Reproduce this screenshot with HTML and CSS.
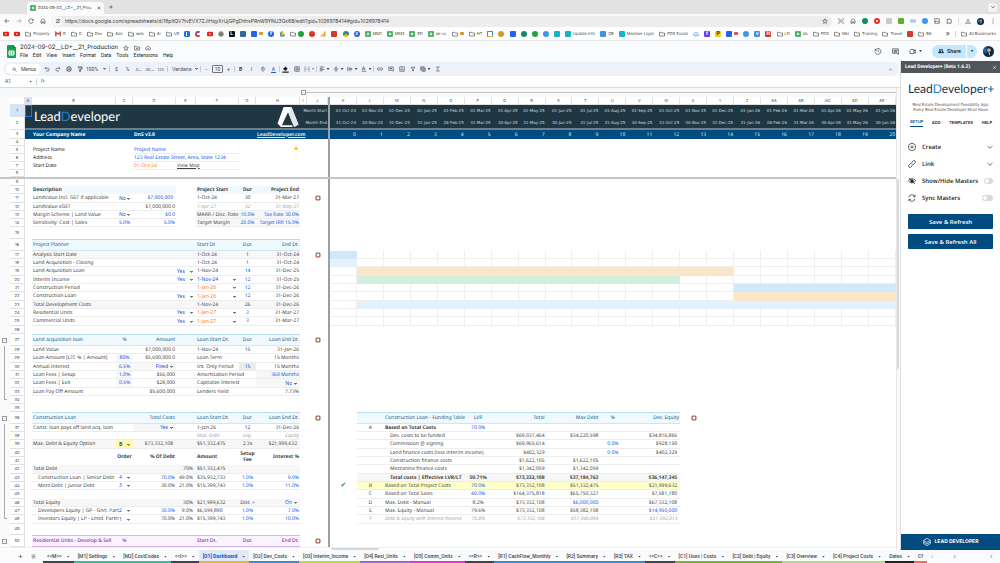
FILE: index.html
```
<!DOCTYPE html>
<html lang="en">
<head>
<meta charset="utf-8">
<title>2024-09-02__LD+__21_Production</title>
<link rel="stylesheet" href="styles.css">
</head>
<body>
<svg class="sprite" aria-hidden="true">
<symbol id="folder" viewBox="0 0 24 24"><path d="M2 5h7l2 3h11v12H2z"/></symbol>
<symbol id="sheet" viewBox="0 0 24 24"><path d="M1 1h22v22H1z" fill="#1e9e4a" stroke="none"/><path d="M12 5v14M5 12h14" stroke="#fff" stroke-width="4"/></symbol>
<symbol id="yt" viewBox="0 0 24 24"><rect y="3" width="24" height="18" rx="4" fill="#e62117" stroke="none"/><path d="M9 8l7 4-7 4z" fill="#fff" stroke="none"/></symbol>
<symbol id="back" viewBox="0 0 24 24"><path d="M21 12H4M11 4l-8 8 8 8"/></symbol>
<symbol id="fwd" viewBox="0 0 24 24"><path d="M3 12h17M13 4l8 8-8 8"/></symbol>
<symbol id="reload" viewBox="0 0 24 24"><path d="M20 8a9 9 0 1 0 1 6M21 3v6h-6"/></symbol>
<symbol id="home" viewBox="0 0 24 24"><path d="M4 10l8-7 8 7v11h-5v-6H9v6H4z"/></symbol>
<symbol id="tune" viewBox="0 0 24 24"><path d="M3 7h9M18 7h3M3 17h3M12 17h9"/><circle cx="15" cy="7" r="3"/><circle cx="9" cy="17" r="3"/></symbol>
<symbol id="star" viewBox="0 0 24 24"><path d="M12 3l3 6 6 1-4.500 5 1 6-5.500-3-5.500 3 1-6L3 10l6-1z"/></symbol>
<symbol id="move" viewBox="0 0 24 24"><path d="M2 5h7l2 3h11v12H2zM8 14h7M12 11l3 3-3 3"/></symbol>
<symbol id="cloud" viewBox="0 0 24 24"><path d="M7 19a5 5 0 0 1-1-10 7 7 0 0 1 13 2 4 4 0 0 1 0 8zM9 14l2 2 4-4"/></symbol>
<symbol id="search" viewBox="0 0 24 24"><circle cx="10" cy="10" r="6"/><path d="M15 15l7 7"/></symbol>
<symbol id="undo" viewBox="0 0 24 24"><path d="M8 20h7a5 5 0 0 0 0-11H4M9 4L4 9l5 5"/></symbol>
<symbol id="redo" viewBox="0 0 24 24"><path d="M16 20H9A5 5 0 0 1 9 9h11M15 4l5 5-5 5"/></symbol>
<symbol id="print" viewBox="0 0 24 24"><path d="M7 8V3h10v5M7 17H3V8h18v9h-4M7 14h10v7H7z"/></symbol>
<symbol id="paint" viewBox="0 0 24 24"><path d="M5 3h13v5H5zM18 5h3v7h-9v4M10 16h4v6h-4z"/></symbol>
<symbol id="strike" viewBox="0 0 24 24"><path d="M3 12h18M17 8c0-5-10-5-10-1 0 2 2 3 5 3M7 16c0 5 10 5 10 1"/></symbol>
<symbol id="fill" viewBox="0 0 24 24"><path d="M5 10l7-7 6 7-6 5z" fill="currentColor"/><path d="M1 21h22" stroke-width="4"/></symbol>
<symbol id="borders" viewBox="0 0 24 24"><path d="M3 3h18v18H3zM12 3v18M3 12h18"/></symbol>
<symbol id="merge" viewBox="0 0 24 24"><path d="M8 3H3v18h5M16 3h5v18h-5M3 12h6M21 12h-6M7 9l3 3-3 3M17 9l-3 3 3 3"/></symbol>
<symbol id="lines" viewBox="0 0 24 24"><path d="M3 4h18M3 9h12M3 14h18M3 19h12"/></symbol>
<symbol id="menu" viewBox="0 0 24 24"><path d="M3 5h18M3 12h18M3 19h18"/></symbol>
<symbol id="valign" viewBox="0 0 24 24"><path d="M3 12h18M12 1v8M12 23v-8M9 6l3 3 3-3M9 18l3-3 3 3"/></symbol>
<symbol id="wrap" viewBox="0 0 24 24"><path d="M3 3v18M12 3v18M5 12h15M17 8l4 4-4 4"/></symbol>
<symbol id="rotate" viewBox="0 0 24 24"><path d="M4 17L10 3l6 14M6 12h8M3 21h18"/></symbol>
<symbol id="link" viewBox="0 0 24 24"><path d="M10 7H7a5 5 0 0 0 0 10h3M14 7h3a5 5 0 0 1 0 10h-3M8 12h8"/></symbol>
<symbol id="comment" viewBox="0 0 24 24"><path d="M3 4h18v17l-4-4H3zM12 7v7M8 10h8"/></symbol>
<symbol id="notes" viewBox="0 0 24 24"><path d="M2 3h20v19l-5-4H2zM6 8h12M6 11h12M6 14h12"/></symbol>
<symbol id="chart" viewBox="0 0 24 24"><path d="M3 3h18v18H3zM8 17v-6M12 17V7M16 17v-4"/></symbol>
<symbol id="filter" viewBox="0 0 24 24"><path d="M4 5h16l-6 8v7h-4v-7z"/></symbol>
<symbol id="views" viewBox="0 0 24 24"><path d="M3 3h14v14H3zM7 21h14V8M3 8h14M3 12h14"/></symbol>
<symbol id="sigma" viewBox="0 0 24 24"><path d="M19 4H6l7 8-7 8h13"/></symbol>
<symbol id="history" viewBox="0 0 24 24"><path d="M3 6v5h5M4 9a9 9 0 1 1-1 5M12 7v6l4 3"/></symbol>
<symbol id="video" viewBox="0 0 24 24"><path d="M7 5h10v14H3V9zM17 10l5-4v12l-5-4"/></symbol>
<symbol id="people" viewBox="0 0 24 24"><path d="M2 19c0-7 12-7 12 0zM16 19h6c0-4-3-6-6-5" fill="currentColor"/><circle cx="8" cy="8" r="3"/><circle cx="16" cy="8" r="3"/></symbol>
<symbol id="scan" viewBox="0 0 24 24"><path d="M2 7V3h5M17 3h5v4M22 17v4h-5M7 21H2v-4M7 8h10v8H7z"/></symbol>
<symbol id="pic" viewBox="0 0 24 24"><path d="M3 3h18v18H3zM3 17l6-6 5 5 3-3 4 4"/></symbol>
<symbol id="puzzle" viewBox="0 0 24 24"><path d="M4 6h5c0-5 6-5 6 0h5v5c4 0 4 5 0 5v5H4v-5c4 0 4-5 0-5z"/></symbol>
<symbol id="download" viewBox="0 0 24 24"><path d="M12 3v12M7 10l5 5 5-5M3 17v4h18v-4"/></symbol>
<symbol id="dots" viewBox="0 0 24 24"><path d="M12 3v3M12 11v3M12 19v3" stroke-width="4"/></symbol>
<symbol id="up" viewBox="0 0 24 24"><path d="M5 16l7-7 7 7"/></symbol>
<symbol id="down" viewBox="0 0 24 24"><path d="M2 8l10 9 10-9"/></symbol>
<symbol id="left" viewBox="0 0 24 24"><path d="M15 5l-7 7 7 7"/></symbol>
<symbol id="right" viewBox="0 0 24 24"><path d="M9 5l7 7-7 7"/></symbol>
<symbol id="close" viewBox="0 0 24 24"><path d="M4 4l16 16M20 4L4 20"/></symbol>
<symbol id="plus" viewBox="0 0 24 24"><path d="M12 3v18M3 12h18"/></symbol>
<symbol id="buoy" viewBox="0 0 24 24"><circle cx="12" cy="12" r="8" stroke="#9a9a9a" stroke-width="6"/><path d="M4 9a9 9 0 0 1 5-5M15 4a9 9 0 0 1 5 5M20 15a9 9 0 0 1-5 5M9 20a9 9 0 0 1-5-5" stroke="#d9573c" stroke-width="5"/><circle cx="12" cy="12" r="4" fill="#fff" stroke="none"/></symbol>
<symbol id="addc" viewBox="0 0 24 24"><circle cx="12" cy="12" r="11"/><path d="M12 7v10M7 12h10"/></symbol>
<symbol id="chain" viewBox="0 0 24 24"><path d="M10 14a4 4 0 0 0 6 0l5-5a4 4 0 0 0-6-6l-3 3M14 10a4 4 0 0 0-6 0l-5 5a4 4 0 0 0 6 6l3-3"/></symbol>
<symbol id="hide" viewBox="0 0 24 24"><path d="M1 11c6-8 16-8 22 0-6 9-16 9-22 0zM3 3l18 18"/><circle cx="12" cy="12" r="4" fill="currentColor"/></symbol>
<symbol id="sync" viewBox="0 0 24 24"><path d="M3 10a9 9 0 0 1 17-3M21 2v6h-6M21 14a9 9 0 0 1-17 3M3 22v-6h6"/></symbol>
<symbol id="cube" viewBox="0 0 24 24"><path d="M12 1l10 6-10 6L2 7zM2 12l10 6 10-6M2 17l10 6 10-6M2 7v10M22 7v10"/></symbol>
<symbol id="peak" viewBox="0 0 24 24"><path d="M0 20L7 1h9l8 20-5 3-7-17-7 15h12v2H4z" fill="#fff" stroke="none"/><path d="M16 1l8 20-5 3-6-15z" fill="#dfe5e9" stroke="none"/></symbol>
<symbol id="face" viewBox="0 0 24 24"><circle cx="12" cy="12" r="12" fill="#0d2c4c" stroke="none"/><path d="M0 12a12 12 0 0 1 8-11v16z" fill="#1664a0" stroke="none"/><circle cx="13" cy="9" r="4" fill="#d9a58b" stroke="none"/><path d="M5 22c2-11 14-11 16-2" fill="#182430" stroke="none"/><path d="M12 14h3l-1 7z" fill="#fff" stroke="none"/></symbol>
<symbol id="drive" viewBox="0 0 24 24"><path d="M8 2h8l-9 16-4-7z" fill="#17a05d" stroke="none"/><path d="M16 2l8 14h-8L9 5z" fill="#fbc116" stroke="none"/><path d="M3 22l4-7h17l-4 7z" fill="#3b7ded" stroke="none"/></symbol>
<symbol id="gmail" viewBox="0 0 24 24"><path d="M3 21V5l9 8 9-8v16" stroke="#df4334" stroke-width="5"/><path d="M3 21V9" stroke="#4285f4" stroke-width="5"/></symbol>
<symbol id="bars" viewBox="0 0 24 24"><path d="M5 22v-5M12 22V10M19 22V2" stroke="#f29a2e" stroke-width="6"/></symbol>
</svg>

<header class="browser">
  <div class="tabstrip">
    <div class="tab"><svg class="i"><use href="#sheet"/></svg><span>2024-09-02__LD+__21_Proc</span><button class="ib" aria-label="Close tab"><svg class="i s4"><use href="#close"/></svg></button></div>
    <button class="ib" aria-label="New tab"><svg class="i s4"><use href="#plus"/></svg></button>
    <button class="ib tabmenu" aria-label="Search tabs"><svg class="i s4"><use href="#down"/></svg></button>
  </div>
  <div class="address">
    <nav class="nav" aria-label="History">
      <button class="ib" aria-label="Back"><svg class="i"><use href="#back"/></svg></button>
      <button class="ib dim" aria-label="Forward"><svg class="i"><use href="#fwd"/></svg></button>
      <button class="ib" aria-label="Reload"><svg class="i"><use href="#reload"/></svg></button>
      <button class="ib" aria-label="Home"><svg class="i"><use href="#home"/></svg></button>
    </nav>
    <div class="omni"><span class="site"><svg class="i"><use href="#tune"/></svg></span><input aria-label="Address" value="https://docs.google.com/spreadsheets/d/16pltQV7tvEVX7ZJiHqyXrUjGPgDhhsPRnW9YNU3Gx68/edit?gid=1026978414#gid=1026978414"><button class="ib" aria-label="Bookmark"><svg class="i"><use href="#star"/></svg></button></div>
    <div class="exts">
      <svg class="i c-olive"><use href="#scan"/></svg><svg class="i"><use href="#home"/></svg><i class="dot green"></i><i class="dot ring"></i><i class="sq grey"></i><i class="sq lime"></i><svg class="i c-blue"><use href="#link"/></svg><i class="dot sky"></i><svg class="i"><use href="#pic"/></svg><svg class="i"><use href="#puzzle"/></svg>
    </div>
    <div class="exts tail"><svg class="i"><use href="#download"/></svg><svg class="i s7"><use href="#face"/></svg><svg class="i"><use href="#dots"/></svg></div>
  </div>
  <nav class="bookmarks" aria-label="Bookmarks">
    <div class="bm">
      <a><svg class="i"><use href="#yt"/></svg></a><a><svg class="i"><use href="#yt"/></svg></a>
      <a><svg class="i"><use href="#folder"/></svg>Property</a><a><svg class="i"><use href="#gmail"/></svg>G</a><a><svg class="i"><use href="#folder"/></svg>C</a><a><svg class="i"><use href="#folder"/></svg>Dev</a><a><svg class="i"><use href="#folder"/></svg>Ads</a><a><svg class="i"><use href="#folder"/></svg>web</a><a><svg class="i"><use href="#folder"/></svg>AI</a><a><svg class="i"><use href="#folder"/></svg>US</a>
      <a><i class="sq trello"></i></a><a><i class="dot ring half"></i></a><a><svg class="i"><use href="#yt"/></svg></a><a><i class="dot greyd"></i></a><a><i class="sq black">L</i></a><a><i class="sq steel"></i></a><a><i class="sq blue"></i><i class="mini amber"></i></a><a><i class="dot blue">f</i></a><a><svg class="i"><use href="#drive"/></svg></a><a><svg class="i"><use href="#folder"/></svg><i class="dot leaf"></i></a><a><i class="dot red half"></i></a><a><svg class="i"><use href="#bars"/></svg></a><a><i class="sq red"></i></a><a><i class="dot multi"></i></a><a><i class="dot blue">z</i></a>
      <a><svg class="i"><use href="#sheet"/></svg>MM1</a><a><svg class="i"><use href="#sheet"/></svg>MM2</a><a><svg class="i"><use href="#sheet"/></svg>ED</a><a><svg class="i"><use href="#sheet"/></svg>ak-cc</a><a><svg class="i"><use href="#folder"/></svg><i class="mini amber"></i></a><a><svg class="i"><use href="#folder"/></svg>HT</a>
      <a><i class="sq cal"></i></a><a><i class="dot amber"></i></a><a><i class="sq blue"></i></a><a><i class="dot green"></i></a><a><i class="dot leaf"></i></a><a><i class="dot sky"></i></a><a><i class="sq cyan"></i></a><a><i class="sq cyan"></i>Update Info</a><a><i class="sq sky"></i>CB</a><a><i class="sq cyan"></i>Member Login</a><a><svg class="i"><use href="#folder"/></svg>PDS Social</a>
      <a><svg class="i c-blue"><use href="#cloud"/></svg></a><a><i class="sq violet">f</i></a><a><i class="sq yellow">P</i></a><a><i class="sq blue"></i><i class="mini redm"></i></a><a><i class="dot sky"></i></a><a><i class="sq sky">v</i></a><a><i class="sq red">H</i></a><a><svg class="i"><use href="#folder"/></svg>LD</a><a><svg class="i"><use href="#sheet"/></svg>db</a><a><svg class="i"><use href="#folder"/></svg>PDS</a><a><svg class="i"><use href="#folder"/></svg>Mkt</a><a><svg class="i"><use href="#folder"/></svg>Training</a><a><svg class="i"><use href="#folder"/></svg>Travel</a><a><i class="sq red"></i></a><a><svg class="i"><use href="#folder"/></svg>BA</a>
    </div>
    <button class="ib more" aria-label="More bookmarks">»</button><span class="bar"></span><a><svg class="i"><use href="#folder"/></svg>All Bookmarks</a>
  </nav>
</header>

<header class="docs">
  <svg class="doclogo" viewBox="0 0 18 26"><path d="M2 0h10l6 6v18a2 2 0 0 1-2 2H2a2 2 0 0 1-2-2V2a2 2 0 0 1 2-2z" fill="#12a150"/><path d="M12 0l6 6h-6z" fill="#0b7a3a"/><path d="M4 12h10v8H4zM9 12v8M4 16h10" fill="none" stroke="#fff" stroke-width="2"/></svg>
  <div class="doctitle">
    <div class="titlerow"><h1>2024-09-02__LD+__21_Production</h1><svg class="i"><use href="#star"/></svg><svg class="i"><use href="#move"/></svg><svg class="i"><use href="#cloud"/></svg></div>
    <nav class="menus" aria-label="Menu bar"><button>File</button><button>Edit</button><button>View</button><button>Insert</button><button>Format</button><button>Data</button><button>Tools</button><button>Extensions</button><button>Help</button></nav>
  </div>
  <div class="docactions">
    <button class="ib" aria-label="Version history"><svg class="i s8"><use href="#history"/></svg></button>
    <button class="ib" aria-label="Comments"><svg class="i s7"><use href="#notes"/></svg></button>
    <button class="ib" aria-label="Meet"><svg class="i s7"><use href="#video"/></svg><i class="caret"></i></button>
    <div class="share"><button class="sharebtn"><svg class="i"><use href="#people"/></svg>Share</button><button class="sharemore" aria-label="Share options"><i class="caret"></i></button></div>
    <svg class="avatar"><use href="#face"/></svg>
  </div>
</header>

<main class="work">
  <section class="left">
    <div class="toolbar" role="toolbar" aria-label="Formatting">
      <button class="menusearch"><svg class="i s5"><use href="#search"/></svg>Menus</button>
      <button class="t" aria-label="Undo"><svg class="i"><use href="#undo"/></svg></button><button class="t" aria-label="Redo"><svg class="i"><use href="#redo"/></svg></button><button class="t" aria-label="Print"><svg class="i"><use href="#print"/></svg></button><button class="t" aria-label="Paint format"><svg class="i"><use href="#paint"/></svg></button>
      <select class="tsel" aria-label="Zoom"><option>100%</option></select><span class="sep"></span>
      <button class="t">$</button><button class="t">%</button><button class="t small">.0←</button><button class="t small">.00→</button><button class="t small">123</button><span class="sep"></span>
      <select class="tsel wide" aria-label="Font"><option>Verdana</option></select><span class="sep tight"></span>
      <button class="t" aria-label="Smaller">−</button><input class="fsize" aria-label="Font size" value="10"><button class="t" aria-label="Larger">+</button><span class="sep tight"></span>
      <button class="t"><b>B</b></button><button class="t"><em>I</em></button><button class="t" aria-label="Strikethrough"><svg class="i"><use href="#strike"/></svg></button><button class="t"><span class="txtcol">A</span></button><span class="sep tight"></span>
      <button class="t dark" aria-label="Fill colour"><svg class="i s7"><use href="#fill"/></svg></button><button class="t" aria-label="Borders"><svg class="i"><use href="#borders"/></svg></button><button class="t d dim" aria-label="Merge"><svg class="i"><use href="#merge"/></svg><i class="caret"></i></button><span class="sep tight"></span>
      <button class="t d" aria-label="Align"><svg class="i"><use href="#lines"/></svg><i class="caret"></i></button><button class="t d" aria-label="Vertical align"><svg class="i"><use href="#valign"/></svg><i class="caret"></i></button><button class="t d" aria-label="Wrap"><svg class="i"><use href="#wrap"/></svg><i class="caret"></i></button><button class="t d" aria-label="Rotate"><svg class="i"><use href="#rotate"/></svg><i class="caret"></i></button><span class="sep tight"></span>
      <button class="t" aria-label="Link"><svg class="i"><use href="#link"/></svg></button><button class="t" aria-label="Comment"><svg class="i"><use href="#comment"/></svg></button><button class="t" aria-label="Chart"><svg class="i"><use href="#chart"/></svg></button><button class="t" aria-label="Filter"><svg class="i"><use href="#filter"/></svg></button><button class="t d" aria-label="Filter views"><svg class="i"><use href="#views"/></svg><i class="caret"></i></button><button class="t" aria-label="Functions"><svg class="i"><use href="#sigma"/></svg></button>
      <button class="ib collapse" aria-label="Hide menus"><svg class="i s5"><use href="#up"/></svg></button>
    </div>
    <div class="formula"><input class="namebox" aria-label="Cell" value="A1"><i class="caret"></i><span class="bar"></span><em>fx</em><input class="fx" aria-label="Formula"></div>

    <div class="sheetwrap">
      <div class="sheet">
        <div class="groupbar"><button class="tg" aria-label="Collapse columns">−</button><span></span></div>
        <table>
          <colgroup><col class="w10"><col class="w15"><col class="w7"><col class="w84"><col class="w17"><col class="w43"><col class="w20"><col class="w43"><col class="w17"><col class="w44"><col class="w7"><col class="w21"><col class="w2"><col span="21"></colgroup>
          <thead><tr><td class="gt"></td><th></th><th class="on">A</th><th>B</th><th>C</th><th>D</th><th>E</th><th>F</th><th>G</th><th>H</th><th>I</th><th>J</th><td class="fz"></td><th>K</th><th>L</th><th>M</th><th>N</th><th>O</th><th>P</th><th>Q</th><th>R</th><th>S</th><th>T</th><th>U</th><th>V</th><th>W</th><th>X</th><th>Y</th><th>Z</th><th>AA</th><th>AB</th><th>AC</th><th>AD</th><th>AE</th></tr></thead>
          <tbody>
          <tr class="navy h12"><td class="gt"></td><th class="on">1</th><td class="a1"></td><td colspan="6" rowspan="2" class="logo">Lead<b>D</b>eveloper</td><td rowspan="2" class="r"><svg class="peak"><use href="#peak"/></svg></td><td colspan="2" class="r">Month Start</td><td class="fz"></td><td>01-Oct-24</td><td>01-Nov-24</td><td>01-Dec-24</td><td>01-Jan-25</td><td>01-Feb-25</td><td>01-Mar-25</td><td>01-Apr-25</td><td>01-May-25</td><td>01-Jun-25</td><td>01-Jul-25</td><td>01-Aug-25</td><td>01-Sep-25</td><td>01-Oct-25</td><td>01-Nov-25</td><td>01-Dec-25</td><td>01-Jan-26</td><td>01-Feb-26</td><td>01-Mar-26</td><td>01-Apr-26</td><td>01-May-26</td><td>01-Jun-26</td></tr>
          <tr class="navy h13"><td class="gt"></td><th>2</th><td></td><td colspan="2" class="r">Month End</td><td class="fz"></td><td>31-Oct-24</td><td>30-Nov-24</td><td>31-Dec-24</td><td>31-Jan-25</td><td>28-Feb-25</td><td>31-Mar-25</td><td>30-Apr-25</td><td>31-May-25</td><td>30-Jun-25</td><td>31-Jul-25</td><td>31-Aug-25</td><td>30-Sep-25</td><td>31-Oct-25</td><td>30-Nov-25</td><td>31-Dec-25</td><td>31-Jan-26</td><td>28-Feb-26</td><td>31-Mar-26</td><td>30-Apr-26</td><td>31-May-26</td><td>30-Jun-26</td></tr>
          <tr class="ocean h9"><td class="gt"></td><th>3</th><td></td><td class="b l">Your Company Name</td><td></td><td class="b l">DnS v3.0</td><td></td><td></td><td></td><td class="b r"><a href="#" >LeadDeveloper.com</a></td><td></td><td></td><td class="fz"></td><td>0</td><td>1</td><td>2</td><td>3</td><td>4</td><td>5</td><td>6</td><td>7</td><td>8</td><td>9</td><td>10</td><td>11</td><td>12</td><td>13</td><td>14</td><td>15</td><td>16</td><td>17</td><td>18</td><td>19</td><td>20</td></tr>
          <tr class="h7"><td class="gt"></td><th>4</th><td colspan="10"></td><td class="fz"></td><td colspan="21"></td></tr>
          <tr class="form"><td class="gt"></td><th>5</th><td></td><td class="k">Project Name</td><td></td><td class="bl">Project Name</td><td></td><td></td><td></td><td class="r spark">✦</td><td></td><td></td><td class="fz"></td><td colspan="21"></td></tr>
          <tr class="form"><td class="gt"></td><th>6</th><td></td><td class="k">Address</td><td></td><td class="bl">123 Real Estate Street, Area, State 1234</td><td></td><td></td><td></td><td></td><td></td><td></td><td class="fz"></td><td colspan="21"></td></tr>
          <tr class="form"><td class="gt"></td><th>7</th><td></td><td class="k">Start Date</td><td></td><td class="or">01-Oct-24</td><td><a href="#">View Map</a></td><td></td><td></td><td></td><td></td><td></td><td class="fz"></td><td colspan="21"></td></tr>
          <tr class="h7"><td class="gt"></td><th>8</th><td colspan="10"></td><td class="fz"></td><td colspan="21"></td></tr>
          <tr class="freeze"><td colspan="34"></td></tr>
          <tr class="h7"><td class="gt"></td><th>9</th><td colspan="10"></td><td class="fz"></td><td colspan="21"></td></tr>
          <tr class="sub split"><td class="gt"></td><th>10</th><td></td><td>Description</td><td></td><td></td><td></td><td>Project Start</td><td class="c">Dur</td><td class="r">Project End</td><td></td><td></td><td class="fz"></td><td colspan="21"></td></tr>
          <tr class="ln split h9"><td class="gt"></td><th>11</th><td></td><td>LandValue Incl. GST if applicable</td><td class="bl"><select aria-label="GST"><option>No</option></select></td><td class="r bl in">$7,000,000</td><td></td><td>1-Oct-24</td><td class="c">30</td><td class="r">31-Mar-27</td><td></td><td class="c"><svg class="i"><use href="#buoy"/></svg></td><td class="fz"></td><td colspan="21"></td></tr>
          <tr class="ln split"><td class="gt"></td><th>12</th><td></td><td>LandValue xGST</td><td></td><td class="r">$7,000,000.0</td><td></td><td class="mu">1-Apr-27</td><td class="c mu">32</td><td class="r mu">31-May-27</td><td></td><td></td><td class="fz"></td><td colspan="21"></td></tr>
          <tr class="ln split sh3"><td class="gt"></td><th>13</th><td></td><td>Margin Scheme | Land Value</td><td class="bl"><select aria-label="Margin scheme"><option>No</option></select></td><td class="r bl">$0.0</td><td></td><td>MARR / Disc. Rate</td><td class="c bl">10.0%</td><td class="r bl">Tax Rate 30.0%</td><td></td><td></td><td class="fz"></td><td colspan="21"></td></tr>
          <tr class="ln split sh3"><td class="gt"></td><th>14</th><td></td><td>Sensitivity: Cost | Sales</td><td class="c bl">5.0%</td><td class="r bl">5.0%</td><td></td><td>Target Margin</td><td class="c bl">20.0%</td><td class="r bl">Target IRR 15.0%</td><td></td><td></td><td class="fz"></td><td colspan="21"></td></tr>
          <tr class="h12"><td class="gt"></td><th>15</th><td colspan="10"></td><td class="fz"></td><td colspan="21"></td></tr>
          <tr class="hd h12"><td class="gt"></td><th>16</th><td></td><td>Project Planner</td><td></td><td></td><td></td><td>Start Dt</td><td class="c">Dur.</td><td class="r">End Dt.</td><td></td><td></td><td class="fz"></td><td colspan="21"></td></tr>
          <tr class="ln sh tl"><td class="gt"></td><th>17</th><td></td><td>Analysis Start Date</td><td></td><td></td><td></td><td>1-Oct-24</td><td class="c">1</td><td class="r">31-Oct-24</td><td></td><td class="c"><svg class="i"><use href="#buoy"/></svg></td><td class="fz"></td><td class="sky2"></td><td><td><td><td><td><td><td><td><td><td><td><td><td><td><td><td><td><td><td><td></td></tr>
          <tr class="ln tl"><td class="gt"></td><th>18</th><td></td><td>Land Acquisition - Closing</td><td></td><td></td><td></td><td>1-Oct-24</td><td class="c">1</td><td class="r">31-Oct-24</td><td></td><td></td><td class="fz"></td><td class="sky1"></td><td><td><td><td><td><td><td><td><td><td><td><td><td><td><td><td><td><td><td><td></td></tr>
          <tr class="ln tl h9"><td class="gt"></td><th>19</th><td></td><td>Land Acquisition Loan</td><td></td><td></td><td class="bl"><select aria-label="Acquisition loan"><option>Yes</option></select></td><td>1-Nov-24</td><td class="c bl">14</td><td class="r">31-Dec-25</td><td></td><td></td><td class="fz"></td><td></td><td colspan="14" class="peach"></td><td><td><td><td><td><td></td></tr>
          <tr class="ln tl"><td class="gt"></td><th>20</th><td></td><td>Interim Income</td><td></td><td></td><td class="bl"><select aria-label="Interim income"><option>Yes</option></select></td><td class="bl"><select aria-label="Interim start"><option>1-Nov-24</option></select></td><td class="c bl">12</td><td class="r">31-Oct-25</td><td></td><td></td><td class="fz"></td><td></td><td colspan="12" class="mint"></td><td><td><td><td><td><td><td><td></td></tr>
          <tr class="ln tl"><td class="gt"></td><th>21</th><td></td><td>Construction Period</td><td></td><td></td><td></td><td class="or"><select aria-label="Construction start"><option>1-Jan-26</option></select></td><td class="c bl">12</td><td class="r">31-Dec-26</td><td></td><td></td><td class="fz"></td><td><td><td><td><td><td><td><td><td><td><td><td><td><td><td></td><td colspan="6" class="sky2"></td></tr>
          <tr class="ln tl h9"><td class="gt"></td><th>22</th><td></td><td>Construction Loan</td><td></td><td></td><td class="bl"><select aria-label="Construction loan"><option>Yes</option></select></td><td class="or"><select aria-label="Loan start"><option>1-Jan-26</option></select></td><td class="c bl">12</td><td class="r">31-Dec-26</td><td></td><td></td><td class="fz"></td><td><td><td><td><td><td><td><td><td><td><td><td><td><td><td></td><td colspan="6" class="peach"></td></tr>
          <tr class="ln sh tl"><td class="gt"></td><th>23</th><td></td><td>Total Development Costs</td><td></td><td></td><td></td><td>1-Nov-24</td><td class="c">26</td><td class="r">31-Dec-26</td><td></td><td></td><td class="fz"></td><td></td><td colspan="20" class="sky1"></td></tr>
          <tr class="ln tl"><td class="gt"></td><th>24</th><td></td><td>Residential Units</td><td></td><td></td><td class="bl"><select aria-label="Residential"><option>Yes</option></select></td><td class="or"><select aria-label="Residential start"><option>1-Jan-27</option></select></td><td class="c bl">3</td><td class="r">31-Mar-27</td><td></td><td></td><td class="fz"></td><td><td><td><td><td><td><td><td><td><td><td><td><td><td><td><td><td><td><td><td><td></td></tr>
          <tr class="ln tl h9"><td class="gt"></td><th>25</th><td></td><td>Commercial Units</td><td></td><td></td><td class="bl"><select aria-label="Commercial"><option>Yes</option></select></td><td class="or"><select aria-label="Commercial start"><option>1-Jan-27</option></select></td><td class="c bl">3</td><td class="r">31-Mar-27</td><td></td><td></td><td class="fz"></td><td><td><td><td><td><td><td><td><td><td><td><td><td><td><td><td><td><td><td><td><td></td></tr>
          <tr><td class="gt"></td><th>26</th><td colspan="10"></td><td class="fz"></td><td colspan="21"></td></tr>
          <tr class="hd h12"><td class="gt"><button class="tg" aria-label="Collapse rows">−</button></td><th>27</th><td></td><td>Land acquisition loan</td><td class="c">%</td><td class="r">Amount</td><td></td><td>Loan Start Dt.</td><td class="c">Dur.</td><td class="r">Loan End Dt.</td><td></td><td class="c"><svg class="i"><use href="#buoy"/></svg></td><td class="fz"></td><td colspan="21"></td></tr>
          <tr class="ln"><td class="gt gl"></td><th>28</th><td></td><td>Land Value</td><td></td><td class="r">$7,000,000.0</td><td></td><td>1-Nov-24</td><td class="c">15</td><td class="r">31-Jan-26</td><td></td><td></td><td class="fz"></td><td colspan="21"></td></tr>
          <tr class="ln h9"><td class="gt gl"></td><th>29</th><td></td><td>Loan Amount [LTC % | Amount]</td><td class="c bl f">80%</td><td class="r">$5,600,000.0</td><td></td><td>Loan Term</td><td></td><td class="r">15 Months</td><td></td><td></td><td class="fz"></td><td colspan="21"></td></tr>
          <tr class="ln"><td class="gt gl"></td><th>30</th><td></td><td>Annual Interest</td><td class="c bl f">6.5%</td><td class="bl f"><select class="end" aria-label="Interest type"><option>Fixed</option></select></td><td></td><td>Int. Only Period</td><td class="c bl g">15</td><td class="r">15 Months</td><td></td><td></td><td class="fz"></td><td colspan="21"></td></tr>
          <tr class="ln"><td class="gt gl"></td><th>31</th><td></td><td>Loan Fees | Setup</td><td class="c bl f">1.0%</td><td class="r">$56,000</td><td></td><td>Amortisation Period</td><td></td><td class="r bl f">360 Months</td><td></td><td></td><td class="fz"></td><td colspan="21"></td></tr>
          <tr class="ln h9"><td class="gt gl"></td><th>32</th><td></td><td>Loan Fees | Exit</td><td class="c bl f">0.5%</td><td class="r">$28,000</td><td></td><td>Capitalize Interest</td><td></td><td class="bl f"><select class="end" aria-label="Capitalize interest"><option>No</option></select></td><td></td><td></td><td class="fz"></td><td colspan="21"></td></tr>
          <tr class="ln"><td class="gt gl"></td><th>33</th><td></td><td>Loan Pay Off Amount</td><td></td><td class="r">$5,600,000</td><td></td><td>Lenders Yield</td><td></td><td class="r">7.73%</td><td></td><td></td><td class="fz"></td><td colspan="21"></td></tr>
          <tr><td class="gt ge"></td><th>34</th><td colspan="10"></td><td class="fz"></td><td colspan="21"></td></tr>
          <tr><td class="gt"></td><th>35</th><td colspan="10"></td><td class="fz"></td><td colspan="21"></td></tr>
          <tr class="hd fh h12"><td class="gt"><button class="tg" aria-label="Collapse rows">−</button></td><th>36</th><td></td><td>Construction Loan</td><td></td><td class="r">Total Costs</td><td></td><td>Loan Start Dt.</td><td class="c">Dur.</td><td class="r">Loan End Dt.</td><td></td><td class="c"><svg class="i"><use href="#buoy"/></svg></td><td class="fz"></td><td></td><td></td><td colspan="3">Construction Loan - Funding Table</td><td class="c">LVR</td><td colspan="2" class="r">Total</td><td colspan="2" class="r">Max Debt</td><td class="c">%</td><td colspan="2" class="r">Dev. Equity</td><td class="c"><svg class="i"><use href="#buoy"/></svg></td><td colspan="7"></td></tr>
          <tr class="ln fd"><td class="gt gl"></td><th>37</th><td></td><td>Const. loan pays off land acq. loan</td><td></td><td class="bl f"><select class="end" aria-label="Pays off land loan"><option>Yes</option></select></td><td></td><td>1-Jan-26</td><td class="c">12</td><td class="r">31-Dec-26</td><td></td><td></td><td class="fz"></td><td></td><td class="c">A</td><td colspan="3" class="b">Based on Total Costs</td><td class="c bl">70.0%</td><td colspan="2"></td><td colspan="2"></td><td></td><td colspan="2"></td><td colspan="8"></td></tr>
          <tr class="ln fd"><td class="gt gl"></td><th>38</th><td></td><td></td><td></td><td></td><td></td><td class="mu">Max. Debt</td><td class="c mu">Lvg.</td><td class="r mu">Equity</td><td></td><td></td><td class="fz"></td><td></td><td></td><td colspan="3" class="ind">Dev. costs to be funded</td><td></td><td colspan="2" class="r">$69,037,464</td><td colspan="2" class="r">$34,220,598</td><td></td><td colspan="2" class="r in">$34,816,866</td><td colspan="8"></td></tr>
          <tr class="ln sh fd h9"><td class="gt gl"></td><th>39</th><td></td><td>Max. Debt &amp; Equity Option</td><td class="bl b hi"><select aria-label="Option"><option>B</option></select></td><td class="r in">$73,332,108</td><td></td><td>$51,332,475</td><td class="c">2.3x</td><td class="r in">$21,999,632</td><td></td><td></td><td class="fz"></td><td></td><td></td><td colspan="3" class="ind">Commission @ signing</td><td></td><td colspan="2" class="r">$69,965,614</td><td colspan="2"></td><td class="c bl">0.0%</td><td colspan="2" class="r in">$928,150</td><td colspan="8"></td></tr>
          <tr class="fd"><td class="gt gl"></td><th>40</th><td></td><td></td><td rowspan="2" class="b c">Order</td><td rowspan="2" class="b r">% Of Debt</td><td rowspan="2"></td><td rowspan="2" class="b">Amount</td><td rowspan="2" class="b c">Setup<br>Fee</td><td rowspan="2" class="b r">Interest %</td><td></td><td></td><td class="fz"></td><td></td><td></td><td colspan="3" class="ind">Land finance costs (less interim income)</td><td></td><td colspan="2" class="r">$402,329</td><td colspan="2"></td><td class="c bl">0.0%</td><td colspan="2" class="r in">$402,329</td><td colspan="8"></td></tr>
          <tr class="fe"><td class="gt gl"></td><th>41</th><td></td><td></td><td></td><td></td><td class="fz"></td><td></td><td></td><td colspan="3" class="ind">Construction finance costs</td><td></td><td colspan="2" class="r">$1,622,105</td><td colspan="2" class="r">$1,622,105</td><td></td><td colspan="2"></td><td colspan="8"></td></tr>
          <tr class="ln sh fd h9"><td class="gt gl"></td><th>42</th><td></td><td>Total Debt</td><td></td><td></td><td class="r in">70%</td><td>$51,332,475</td><td></td><td></td><td></td><td></td><td class="fz"></td><td></td><td></td><td colspan="3" class="ind">Mezzanine finance costs</td><td></td><td colspan="2" class="r">$1,342,059</td><td colspan="2" class="r">$1,342,059</td><td></td><td colspan="2"></td><td colspan="8"></td></tr>
          <tr class="ln fd ft"><td class="gt gl"></td><th>43</th><td></td><td class="ind">Construction Loan | Senior Debt</td><td class="bl"><select aria-label="Senior order"><option>4</option></select></td><td class="r bl">70.0%</td><td class="r in">49.0%</td><td>$35,932,733</td><td class="c bl">1.0%</td><td class="r bl">9.0%</td><td></td><td></td><td class="fz"></td><td></td><td></td><td colspan="3" class="ind b">Total costs | Effective LVR/LT</td><td class="c b">50.71%</td><td colspan="2" class="r b">$73,332,108</td><td colspan="2" class="r b">$37,184,763</td><td></td><td colspan="2" class="r in b">$36,147,345</td><td colspan="8"></td></tr>
          <tr class="ln fd fy"><td class="gt gl"></td><th>44</th><td></td><td class="ind">Mezz.Debt | Junior Debt</td><td class="bl"><select aria-label="Junior order"><option>3</option></select></td><td class="r">30.0%</td><td class="r in">21.0%</td><td>$15,399,743</td><td class="c bl">1.0%</td><td class="r bl">11.0%</td><td></td><td></td><td class="fz"></td><td class="c tick">✔</td><td class="c">B</td><td colspan="3">Based on Total Project Costs</td><td class="c bl">70.0%</td><td colspan="2" class="r">$73,332,108</td><td colspan="2" class="r">$51,332,475</td><td></td><td colspan="2" class="r in">$21,999,632</td><td colspan="8"></td></tr>
          <tr class="fd h9"><td class="gt gl"></td><th>45</th><td></td><td></td><td></td><td></td><td></td><td></td><td></td><td></td><td></td><td></td><td class="fz"></td><td></td><td class="c">C</td><td colspan="3">Based on Total Sales</td><td class="c bl">40.0%</td><td colspan="2" class="r">$164,375,818</td><td colspan="2" class="r">$65,750,327</td><td></td><td colspan="2" class="r in">$7,581,780</td><td colspan="8"></td></tr>
          <tr class="ln sh fd"><td class="gt gl"></td><th>46</th><td></td><td>Total Equity</td><td></td><td></td><td class="r in">30%</td><td>$21,999,632</td><td class="c">Dist. &gt;</td><td class="bl"><select class="end" aria-label="Distribution"><option>On</option></select></td><td></td><td></td><td class="fz"></td><td></td><td class="c">D</td><td colspan="3">Max. Debt - Manual</td><td class="c">8.2%</td><td colspan="2" class="r">$73,332,108</td><td colspan="2" class="r bl">$6,000,000</td><td></td><td colspan="2" class="r in">$67,332,108</td><td colspan="8"></td></tr>
          <tr class="ln fd"><td class="gt gl"></td><th>47</th><td></td><td class="ind">Developers Equity | GP - Gnrl. Part</td><td class="bl"><select aria-label="GP order"><option>2</option></select></td><td class="r bl">30.0%</td><td class="r in">9.0%</td><td>$6,599,890</td><td class="c bl">1.0%</td><td class="r bl">7.0%</td><td></td><td></td><td class="fz"></td><td></td><td class="c">E</td><td colspan="3">Max. Equity - Manual</td><td class="c">79.6%</td><td colspan="2" class="r">$73,332,108</td><td colspan="2" class="r">$58,382,108</td><td></td><td colspan="2" class="r in bl">$14,950,000</td><td colspan="8"></td></tr>
          <tr class="ln fd h9"><td class="gt ge"></td><th>48</th><td></td><td class="ind">Investors Equity | LP - Lmtd. Partn</td><td class="bl"><select aria-label="LP order"><option>1</option></select></td><td class="r">70.0%</td><td class="r in">21.0%</td><td>$15,399,743</td><td class="c bl">1.0%</td><td class="r bl">10.0%</td><td></td><td></td><td class="fz"></td><td></td><td class="c mu">F</td><td colspan="3" class="mu">Debt &amp; Equity with Interest Reserve</td><td class="c mu">70.8%</td><td colspan="2" class="r mu">$73,332,108</td><td colspan="2" class="r mu">$51,940,094</td><td></td><td colspan="2" class="r in mu">$21,392,013</td><td colspan="8"></td></tr>
          <tr class="h11"><td class="gt"></td><th>49</th><td colspan="10"></td><td class="fz"></td><td colspan="21"></td></tr>
          <tr class="hd plum h12"><td class="gt"><button class="tg" aria-label="Collapse rows">−</button></td><th>50</th><td></td><td>Residential Units - Develop &amp; Sell</td><td class="c">%</td><td></td><td></td><td>Start Dt.</td><td class="c">Dur.</td><td class="r">End Dt.</td><td></td><td class="c"><svg class="i"><use href="#buoy"/></svg></td><td class="fz"></td><td colspan="21"></td></tr>
          </tbody>
        </table>
        <div class="hscroll"><span></span></div>
      </div>
      <div class="vscroll"><span></span></div>
    </div>
  </section>

  <aside class="side">
    <header><span>Lead Developer+ (Beta 1.6.2)</span><button class="ib" aria-label="Close sidebar"><svg class="i s5"><use href="#close"/></svg></button></header>
    <div class="panel">
      <div class="brand">Lead<b>D</b>eveloper<b class="plus">+</b></div>
      <p>Real Estate Development Feasibility App<br>Every Real Estate Developer Must Have</p>
      <nav class="ptabs"><button class="on">SETUP</button><button>ADD</button><button>TEMPLATES</button><button>HELP</button></nav>
      <ul>
        <li><svg class="i s8"><use href="#addc"/></svg><span>Create</span><svg class="i"><use href="#down"/></svg></li>
        <li><svg class="i s8"><use href="#chain"/></svg><span>Link</span><svg class="i"><use href="#down"/></svg></li>
        <li><svg class="i s8"><use href="#hide"/></svg><label for="m1">Show/Hide Masters</label><input type="checkbox" id="m1"></li>
        <li><svg class="i s8"><use href="#sync"/></svg><label for="m2">Sync Masters</label><input type="checkbox" id="m2"></li>
      </ul>
      <button class="cta">Save &amp; Refresh</button>
      <button class="cta">Save &amp; Refresh All</button>
    </div>
    <footer><svg class="i s8"><use href="#cube"/></svg>LEAD DEVELOPER</footer>
  </aside>
</main>

<footer class="sheettabs">
  <button class="ib" aria-label="Add sheet"><svg class="i s5"><use href="#plus"/></svg></button>
  <button class="ib" aria-label="All sheets"><svg class="i s5"><use href="#menu"/></svg></button>
  <nav class="tabs" aria-label="Sheets"><button class="slate">&lt;&lt;M&gt;&gt;<i class="caret"></i></button><button class="teal">[M1] Settings<i class="caret"></i></button><button class="teal">[M2] CostCodes<i class="caret"></i></button><button class="slate">&lt;&lt;I&gt;&gt;<i class="caret"></i></button><button class="gold active">[O1] Dashboard<i class="caret"></i></button><button class="azure">[O2] Dev_Costs<i class="caret"></i></button><button class="limeb">[O3] Interim_Income<i class="caret"></i></button><button class="purple">[O4] Resi_Units<i class="caret"></i></button><button class="pink">[O5] Comm_Units<i class="caret"></i></button><button class="slate">&lt;&lt;R&gt;&gt;<i class="caret"></i></button><button class="azure">[R1] CashFlow_Monthly<i class="caret"></i></button><button class="azure">[R2] Summary<i class="caret"></i></button><button class="azure">[R3] TAX<i class="caret"></i></button><button class="slate">&lt;&lt;C&gt;&gt;<i class="caret"></i></button><button class="leafb">[C1] Uses | Costs<i class="caret"></i></button><button class="leafb">[C2] Debt | Equity<i class="caret"></i></button><button class="pale">[C3] Overview<i class="caret"></i></button><button class="pale">[C4] Project Costs<i class="caret"></i></button><button class="ink">Dates<i class="caret"></i></button><button class="coral">Cf</button></nav>
  <div class="pager"><button class="ib dim" aria-label="Scroll left"><svg class="i s5"><use href="#left"/></svg></button><button class="ib" aria-label="Scroll right"><svg class="i s5"><use href="#right"/></svg></button><button class="ib" aria-label="Show side panel"><svg class="i s5"><use href="#left"/></svg></button></div>
</footer>
</body>
</html>
```
FILE: styles.css
```
* { box-sizing: border-box; }
html, body { height: 100%; }
body {
  margin: 0;
  display: flex;
  flex-direction: column;
  overflow: hidden;
  background: #fff;
  color: #444746;
  font: 5px/7px Roboto, sans-serif;
  text-rendering: geometricPrecision;
}
button, input, select { font: inherit; color: inherit; border: 0; background: none; padding: 0; margin: 0; min-width: 0; outline: 0; border-radius: 0; }
button { white-space: nowrap; }
i { font-style: normal; }
.sprite { position: absolute; width: 0; height: 0; }
.i { width: 6px; height: 6px; flex: none; fill: none; stroke: currentColor; stroke-width: 2.5; }
.s4 { width: 4px; height: 4px; stroke-width: 4; }
.s5 { width: 5px; height: 5px; }
.s7 { width: 7px; height: 7px; }
.s8 { width: 8px; height: 8px; stroke-width: 2; }
.ib { display: inline-flex; align-items: center; justify-content: center; gap: 3px; }
.dim { opacity: .5; }
.caret { display: inline-block; flex: none; width: 3px; height: 2px; background: #444746; clip-path: polygon(0 0, 100% 0, 50% 100%); }
.bar { width: 1px; height: 6px; background: #d0d4d8; }

/* browser */
.tabstrip { display: flex; align-items: center; height: 14px; padding: 0 3px 0 27px; background: #e2e2e2; }
.tab { display: flex; align-items: center; gap: 2px; align-self: flex-end; width: 77px; height: 12px; padding: 0 3px; margin-right: 5px; background: #fbfbfb; border-radius: 4px 4px 0 0; font: 4px/6px Inter, sans-serif; }
.tab span { flex: 1; overflow: hidden; white-space: nowrap; }
.tabmenu { width: 9px; height: 9px; margin-left: auto; background: #f3f3f3; border-radius: 3px; }
.address { display: flex; align-items: center; height: 14px; padding-right: 4px; background: #fbfbfb; color: #3c4043; }
.nav { display: flex; gap: 6px; padding: 0 6px 0 4px; }
.omni { display: flex; align-items: center; flex: 1; height: 11px; background: #ededed; border-radius: 6px; padding: 0 4px 0 1px; }
.site { display: flex; align-items: center; justify-content: center; width: 9px; height: 9px; background: #fbfbfb; border-radius: 50%; margin-right: 3px; }
.omni input { flex: 1; font: 5px/7px Inter, sans-serif; }
.exts { display: flex; align-items: center; gap: 6px; padding: 0 6px; }
.tail { border-left: 1px solid #ddd; padding-right: 0; }
.bookmarks { display: flex; align-items: center; height: 13px; padding: 0 4px 1px 3px; border-bottom: 1px solid #e6e8ea; font: 4px/6px Inter, sans-serif; }
.bookmarks a { display: flex; align-items: center; gap: 2px; white-space: nowrap; }
.bm { display: flex; flex: 1; justify-content: space-between; }
.more { margin: 0 5px 0 14px; font-size: 7px; }
.bookmarks .bar { margin-right: 5px; }
.dot, .sq { display: inline-block; width: 6px; height: 6px; font: bold 5px/6px Inter, sans-serif; text-align: center; color: #fff; background: #888; }
.dot { border-radius: 50%; }
.sq { border-radius: 1px; }
.mini { width: 4px; height: 3px; border-radius: 1px; }
.green { background: #0f8a6a; }
.ring { background: none; border: 2px solid #e0322a; }
.half { border-top-color: #2b5fd0; border-right-color: transparent; }
.grey { background: #c9c9c9; }
.lime { background: #5faf2f; }
.sky { background: #3c95ec; }
.trello { background: linear-gradient(90deg, #1d74d0 1px, #fff 1px 2px, #1d74d0 2px 4px, #fff 4px 5px, #1d74d0 5px); border: 1px solid #1d74d0; }
.greyd { background: #777; border: 1px solid #aaa; }
.black { background: #111; }
.steel { background: #2c6c98; }
.blue { background: #2563e8; }
.leaf { background: #1fa33c; }
.red { background: #d23a2c; }
.redm { background: #e44b4b; }
.multi { background: conic-gradient(#2c7be5 33%, #f4b400 0 66%, #23a455 0); }
.cal { background: #fff; border: 1px solid #4285f4; border-bottom-color: #f4b400; }
.amber { background: #d9962e; }
.cyan { background: #12b6cb; }
.violet { background: #6b3ff0; }
.yellow { background: #f3cf1c; color: #222; }
.c-blue { color: #2f7af0; }
.c-olive { color: #5c7a5c; }

/* document header */
.docs { display: flex; align-items: center; height: 20px; padding: 0 6px 0 7px; background: #f9fbfd; }
.doclogo { width: 9px; height: 13px; margin-right: 4px; }
.titlerow { display: flex; align-items: center; gap: 5px; }
.titlerow h1 { margin: 0; font: 6px/9px Inter, sans-serif; color: #1f1f1f; }
.menus { display: flex; gap: 5px; color: #1f1f1f; }
.docactions { display: flex; align-items: center; gap: 10px; margin-left: auto; }
.share { display: flex; height: 13px; background: #c2e7ff; border-radius: 7px; color: #001d35; }
.sharebtn { display: flex; align-items: center; gap: 3px; padding: 0 5px 0 6px; font: 600 5px/7px Inter, sans-serif; }
.sharemore { width: 11px; border-left: 1px solid #fff; display: flex; align-items: center; justify-content: center; }
.avatar { width: 11px; height: 11px; margin-left: -4px; }

/* workspace */
.work { display: flex; flex: 1; min-height: 0; }
.left { flex: 1; min-width: 0; display: flex; flex-direction: column; background: linear-gradient(#f9fbfd 15px, #fff 15px); }
.toolbar { display: flex; align-items: center; height: 14px; margin: 1px 1px 0 3px; padding: 0 3px; background: #edf2fa; border-radius: 7px; flex: none; }
.menusearch { display: flex; align-items: center; gap: 4px; width: 35px; height: 10px; padding-left: 6px; background: #fff; border-radius: 5px; }
.t { display: inline-flex; align-items: center; justify-content: center; width: 11px; height: 10px; gap: 2px; }
.t.d { width: 14px; }
.t.small { font-size: 4px; }
.dark { color: #111; }
.txtcol { border-bottom: 1px solid #1a5fd0; line-height: 6px; padding: 0 1px; }
.sep { width: 1px; height: 6px; margin: 0 1px; background: #c7ccd2; }
.sep.tight { margin: 0; }
.tsel, td select {
  appearance: none;
  background: linear-gradient(#777, #777) right 2px top 3px / 3px 1px no-repeat, linear-gradient(#999, #999) right 3px top 4px / 1px 1px no-repeat;
}
.tsel { width: 23px; height: 8px; line-height: 8px; padding-left: 1px; }
.tsel.wide { width: 31px; padding-left: 3px; font-family: Inter, sans-serif; }
.fsize { width: 11px; height: 8px; border: 1px solid #747775; border-radius: 1px; text-align: center; }
.collapse { margin-left: auto; margin-right: 3px; }
.formula { display: flex; align-items: center; gap: 4px; height: 12px; padding-left: 5px; border-bottom: 1px solid #d9dbde; flex: none; }
.formula em { font-family: "Liberation Serif", serif; }
.namebox { width: 20px; }
.fx { flex: 1; }
.sheetwrap { display: flex; flex: 1; min-height: 0; }
.sheet { flex: 1; min-width: 0; overflow: hidden; display: flex; flex-direction: column; }
.groupbar { display: flex; align-items: center; height: 9px; padding-left: 301px; background: #f8f9fa; flex: none; }
.groupbar span { flex: 1; height: 1px; background: #c4c4c4; }
.tg { display: block; width: 5px; height: 5px; border: 1px solid #999; background: #fff; font-size: 4px; line-height: 3px; color: #555; overflow: hidden; }

table { width: 100%; table-layout: fixed; border-collapse: separate; border-spacing: 0; font: 5px/7px "Noto Sans", sans-serif; color: #444; flex: none; }
.w2 { width: 2px; } .w7 { width: 7px; } .w10 { width: 10px; } .w15 { width: 15px; } .w17 { width: 17px; } .w20 { width: 20px; }
.w21 { width: 21px; } .w43 { width: 43px; } .w44 { width: 44px; } .w84 { width: 84px; }
tr { height: 8px; }
.h7 { height: 7px; } .h9 { height: 9px; } .h11 { height: 11px; } .h12 { height: 12px; } .h13 { height: 13px; }
td, th { padding: 0 1px; white-space: nowrap; text-align: left; vertical-align: middle; line-height: 6px; }
th { font: 4px/6px Inter, sans-serif; color: #555; text-align: center; padding: 0; border-bottom: 1px solid #e1e1e1; border-right: 1px solid #e1e1e1; background: #fff; }
th.on { background: #d3e3fd; }
.gt { background: #f9faf9; padding: 0 0 0 2px; }
.gl { background: linear-gradient(#aaa, #aaa) 4px 0 / 1px 100% no-repeat #f9faf9; }
.ge { background: linear-gradient(#aaa, #aaa) 4px 0 / 1px 4px no-repeat, linear-gradient(#aaa, #aaa) 4px 3px / 3px 1px no-repeat #f9faf9; }
.fz { background: #9aa0a6; padding: 0; }
.r { text-align: right; }
.c { text-align: center; }
.b { font-weight: 700; }
.k { color: #111; }
.bl { color: #1155e8; }
.or { color: #f58a07; }
.mu { color: #a8a8a8; font-style: italic; }
.ind { padding-left: 6px; }
td.in { padding-right: 3px; }
td .i { display: inline-block; vertical-align: middle; }
td a { color: inherit; }
.tick { color: #1c9c3c; font-size: 7px; }
.spark { color: #f4b400; font-size: 7px; }
td select { display: block; width: 100%; height: 7px; line-height: 7px; padding: 0 0 0 2px; }
td:nth-child(7) select, td:nth-child(8) select { padding-left: 0; }
td select.end { text-align-last: right; padding-right: 7px; }

.navy td:nth-child(n+3):not(.fz) { background: #1f3643; color: #d5dadd; text-align: right; font: 4px/6px "DejaVu Sans", sans-serif; }
.navy.h13 td:nth-child(n+3):not(.fz), .navy [rowspan] { border-bottom: 2px solid #6d7f8a; }
.navy td.logo:nth-child(n+3):not(.fz) { text-align: left; color: #fff; font: 13px/16px Lato, sans-serif; padding: 0 0 2px 2px; }
.logo b, .brand b { font-weight: 400; color: #1b82c9; }
.navy td.a1 { outline: 1px solid #1a73e8; outline-offset: -1px; }
.peak { width: 22px; height: 21px; display: inline-block; vertical-align: middle; }
.ocean td:nth-child(n+3):not(.fz) { background: #004b80; color: #dfe8ef; text-align: right; }
.ocean td.l:nth-child(n+3):not(.fz) { text-align: left; color: #fff; }
.form td:nth-child(n+6):nth-child(-n+8) { border-bottom: 1px solid #ececec; }
.freeze { height: 2px; }
.freeze td { background: #c4c6c8; line-height: 0; }

.ln td:nth-child(n+4):nth-child(-n+10), .fd td:nth-child(n+15):nth-child(-n+21) { border-bottom: 1px solid #ededed; }
.fe td:nth-child(n+9):nth-child(-n+15) { border-bottom: 1px solid #ededed; }
.sh td:nth-child(n+4):nth-child(-n+10), .sh3 td:nth-child(n+8):nth-child(-n+10), .f, .ft td:nth-child(n+15):nth-child(-n+21) { background: #f7f7f7; }
.g { background: #ececee; }
.sub td:nth-child(n+4):nth-child(-n+10) { background: #eff9fe; font-weight: 700; }
.hd td:nth-child(n+4):nth-child(-n+10), .fh td:nth-child(n+15):nth-child(-n+21) { background: #eff9fe; color: #1a5c8a; border-top: 1px solid #b9dcf0; border-bottom: 1px solid #cfe6f3; }
.plum.hd td:nth-child(n+4):nth-child(-n+10) { background: #faf2fe; color: #8e2bb8; border-color: #d8b6ea; font-weight: 500; }
.split td:nth-child(7) { background: none !important; border-bottom: 0 !important; }
.fy td:nth-child(n+15):nth-child(-n+21) { background: #ffffc9; }
.ln td.hi:nth-child(5) { background: #fff9a8; }
.tl td:nth-child(n+14) { border-right: 1px solid #efefef; border-bottom: 1px solid #efefef; }
.tl td.sky2:nth-child(n+14) { background: #cfe9fb; border: 0; }
.tl td.sky1:nth-child(n+14) { background: #e3f1fd; border: 0; }
.tl td.peach:nth-child(n+14) { background: #fce5c8; border: 0; }
.tl td.mint:nth-child(n+14) { background: #d2eedc; border: 0; }

.hscroll { margin-top: auto; height: 3px; padding-left: 331px; background: #fff; border-top: 1px solid #eee; flex: none; }
.hscroll span { display: block; width: 48px; height: 2px; border-radius: 1px; background: #d5d8dc; }
.vscroll { width: 4px; padding: 91px 1px 0 0; border-left: 1px solid #e6e6e6; background: #fafafa; }
.vscroll span { display: block; height: 190px; background: #d7dbe0; border-radius: 1px; }

/* side panel */
.side { width: 100px; flex: none; display: flex; flex-direction: column; background: #fff; color: #1c1c1c; border-left: 1px solid #ddd; }
.side header { display: flex; align-items: center; justify-content: space-between; height: 12px; padding: 0 3px 0 4px; background: #505659; color: #fff; font-weight: 700; }
.panel { padding: 8px 7px 0; flex: 1; display: flex; flex-direction: column; }
.brand { font: 12px/16px Lato, sans-serif; color: #17364a; text-align: center; white-space: nowrap; }
.brand .plus { font-weight: 700; }
.panel p { margin: 5px 0 0; font: 4px/5px Inter, sans-serif; color: #555; text-align: center; white-space: nowrap; }
.ptabs { display: flex; justify-content: space-between; padding: 0 1px 0 2px; margin-top: 6px; font: 600 4px/8px Inter, sans-serif; }
.ptabs .on { color: #00508a; border-bottom: 1px solid #00508a; }
.panel ul { list-style: none; margin: 11px 0 8px; padding: 0; }
.panel li { display: flex; align-items: center; gap: 6px; height: 17px; font: 600 6px/8px "Open Sans", sans-serif; white-space: nowrap; }
.panel li > :nth-child(2) { flex: 1; }
.panel li input { appearance: none; width: 11px; height: 6px; border-radius: 3px; background: radial-gradient(circle at 3px 3px, #fff 2px, transparent 2px) #d9d9d9; }
.cta { height: 15px; margin-bottom: 5px; background: #004b80; color: #fff; border-radius: 1px; font: 600 6px/8px "Open Sans", sans-serif; }
.side footer { display: flex; align-items: center; justify-content: center; gap: 4px; height: 16px; background: #004b80; color: #fff; font: 700 5px/7px Inter, sans-serif; }

/* sheet tabs */
.sheettabs { display: flex; align-items: center; height: 13px; flex: none; padding-left: 14px; background: #f9fbfd; }
.sheettabs > .ib { width: 13px; }
.tabs { display: flex; flex: 1; min-width: 0; overflow: hidden; align-self: stretch; margin-left: 3px; }
.tabs button { display: flex; align-items: center; gap: 5px; flex: none; padding: 2px 4px 0; border-bottom: 2px solid; font: 500 5px/7px Roboto, sans-serif; color: #444746; }
.tabs .active { background: #e1e9f7; color: #0b57d0; font-weight: 700; }
.tabs .slate { border-color: #37474f; } .tabs .teal { border-color: #2bc4a0; } .tabs .gold { border-color: #f0b429; }
.tabs .azure { border-color: #2f8fd8; } .tabs .limeb { border-color: #b9dc3c; } .tabs .purple { border-color: #9a6ad8; }
.tabs .pink { border-color: #e234d8; } .tabs .leafb { border-color: #76b82a; } .tabs .pale { border-color: #b5d88a; }
.tabs .ink { border-color: #222; } .tabs .coral { border-color: #f26b5e; }
.pager { display: flex; align-items: center; gap: 17px; width: 72px; padding-left: 2px; flex: none; }
.pager :last-child { margin-left: auto; margin-right: 6px; }
.pager svg:last-child { margin: 0; }
```
